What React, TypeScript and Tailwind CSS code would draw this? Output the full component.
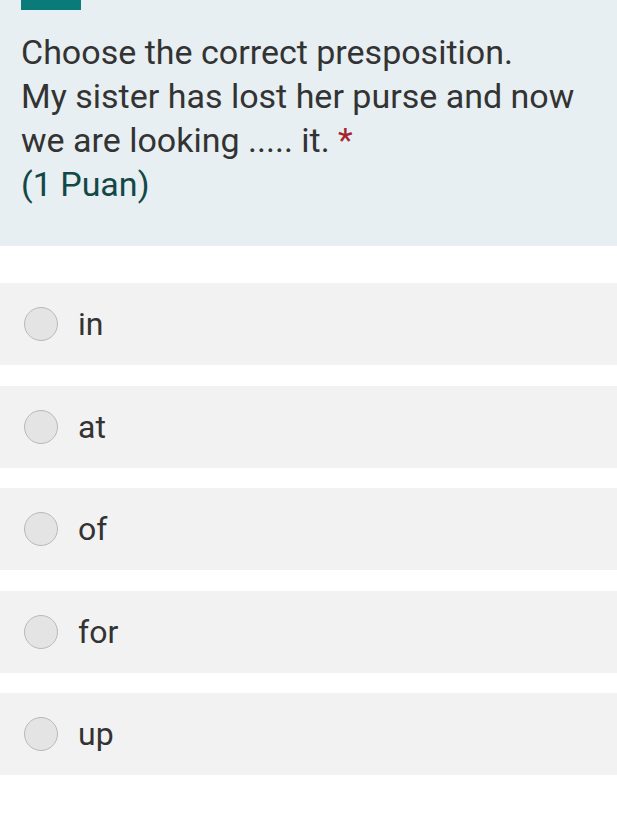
import React from 'react';

const options = ['in', 'at', 'of', 'for', 'up'];

const App: React.FC = () => {
  return (
    <div className="min-h-screen bg-white" style={{ fontFamily: 'Roboto, "Noto Sans", sans-serif' }}>
      <div className="bg-[#e7eff2] h-[246px] px-[21px]">
        <div className="w-[60px] h-[10px] bg-[#0b7b79]" />
        <div className="mt-[20px] text-[34px] leading-[44px] text-[#333333]">
          <div>Choose the correct presposition.</div>
          <div>My sister has lost her purse and now</div>
          <div>
            we are looking ..... it. <span className="text-[#a4262c]">*</span>
          </div>
          <div className="text-[#124846]">(1 Puan)</div>
        </div>
      </div>

      <div className="pt-[37px] flex flex-col gap-[20.5px]">
        {options.map((opt) => (
          <div key={opt} className="h-[82px] bg-[#f2f2f2] flex items-center pl-[24px]">
            <div className="w-[34px] h-[34px] rounded-full bg-[#e4e4e4] border border-[#b9b9b9]" />
            <span className="ml-[20px] text-[32px] text-[#333333]">{opt}</span>
          </div>
        ))}
      </div>
    </div>
  );
};

export default App;
